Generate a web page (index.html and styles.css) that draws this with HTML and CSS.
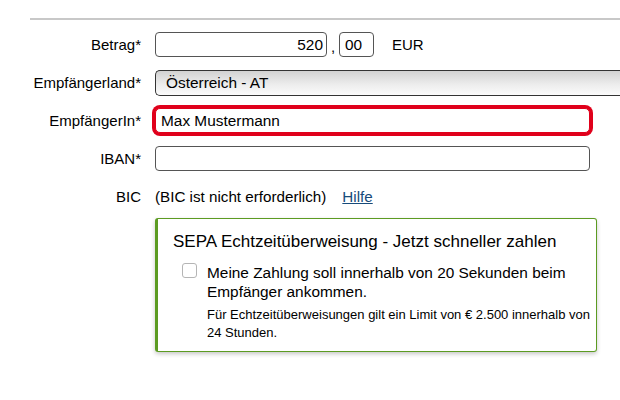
FILE: index.html
```html
<!DOCTYPE html>
<html lang="de">
<head>
<meta charset="utf-8">
<link rel="stylesheet" href="styles.css">
</head>
<body>
<div class="page">
  <div class="rule"></div>
  <div class="form">
    <div class="label">Betrag*</div>
    <div class="field amount">
      <div class="input int">520</div>
      <span class="comma">,</span>
      <div class="input cents">00</div>
      <span class="cur">EUR</span>
    </div>

    <div class="label">Empfängerland*</div>
    <div class="field">
      <div class="select">Österreich - AT</div>
    </div>

    <div class="label">EmpfängerIn*</div>
    <div class="field">
      <div class="input wide focus">Max Mustermann</div>
    </div>

    <div class="label">IBAN*</div>
    <div class="field">
      <div class="input wide"></div>
    </div>

    <div class="label bic">BIC</div>
    <div class="field bic-info">
      <span>(BIC ist nicht erforderlich)</span>
      <a class="help" href="#">Hilfe</a>
    </div>

    <div></div>
    <div class="sepa">
      <div class="sepa-title">SEPA Echtzeitüberweisung - Jetzt schneller zahlen</div>
      <div class="sepa-check">
        <span class="checkbox"></span>
        <div class="sepa-text">
          <div class="sepa-main">Meine Zahlung soll innerhalb von 20 Sekunden beim Empfänger ankommen.</div>
          <div class="sepa-note">Für Echtzeitüberweisungen gilt ein Limit von € 2.500 innerhalb von 24 Stunden.</div>
        </div>
      </div>
    </div>
  </div>
</div>
</body>
</html>
```

FILE: styles.css
```css
html, body {
  margin: 0;
  padding: 0;
  background: #ffffff;
}
body {
  font-family: "Liberation Sans", Arial, Helvetica, sans-serif;
  color: #000;
  width: 620px;
  height: 400px;
  overflow: hidden;
}
.page {
  padding-top: 18px;
}
.rule {
  margin-left: 30px;
  height: 2px;
  background: #c8c8c8;
}
.form {
  display: grid;
  grid-template-columns: 141px 1fr;
  column-gap: 14px;
  row-gap: 13px;
  margin-top: 12px;
  align-items: center;
}
.label {
  text-align: right;
  font-size: 15px;
  color: #000;
}
.field {
  display: flex;
  align-items: center;
  height: 25px;
  min-width: 0;
}
.input {
  box-sizing: border-box;
  height: 25px;
  border: 1px solid #555;
  border-radius: 4px;
  background: #fff;
  font-size: 15.4px;
  line-height: 23px;
  padding: 0 6px;
  color: #000;
}
.int {
  width: 172px;
  text-align: right;
  padding-right: 3px;
}
.comma {
  font-size: 15px;
  width: 12px;
  text-align: center;
  margin-top: 4px;
}
.cents {
  width: 35px;
  padding-left: 5px;
}
.cur {
  font-size: 15px;
  margin-left: 18px;
}
.select {
  box-sizing: border-box;
  height: 26px;
  width: 480px;
  flex: none;
  border: 1px solid #333;
  border-right: none;
  border-radius: 5px 0 0 5px;
  background: linear-gradient(#d2d2d2, #ececec 55%, #fbfbfb);
  font-size: 15.4px;
  line-height: 24px;
  padding-left: 10px;
  color: #000;
}
.wide {
  width: 435px;
}
.focus {
  border: 1px solid #e0001b;
  box-shadow: 0 0 0 3px #e0001b;
  border-radius: 5px;
  padding-left: 5px;
  line-height: 23px;
}
.bic-info {
  font-size: 15.2px;
  gap: 16px;
}
.help {
  color: #174b7a;
  text-decoration: underline;
}
.sepa {
  box-sizing: border-box;
  width: 442px;
  margin-top: -4.5px;
  border: 1.5px solid #5c9b22;
  border-left: 3px solid #5c9b22;
  border-radius: 3px;
  box-shadow: 0 2px 4px rgba(0, 0, 0, 0.22);
  padding: 13.5px 2px 9px 15px;
}
.sepa-title {
  font-size: 17px;
  line-height: 20px;
}
.sepa-check {
  display: flex;
  margin-top: 11px;
  padding-left: 9px;
}
.checkbox {
  flex: none;
  box-sizing: border-box;
  width: 15px;
  height: 15px;
  border: 1px solid #b5b5b5;
  border-radius: 3px;
  background: #fff;
  margin-right: 10px;
}
.sepa-text {
  padding-right: 4px;
}
.sepa-main {
  font-size: 15.4px;
  line-height: 19px;
}
.sepa-note {
  font-size: 13px;
  line-height: 18px;
  margin-top: 5px;
}
```
